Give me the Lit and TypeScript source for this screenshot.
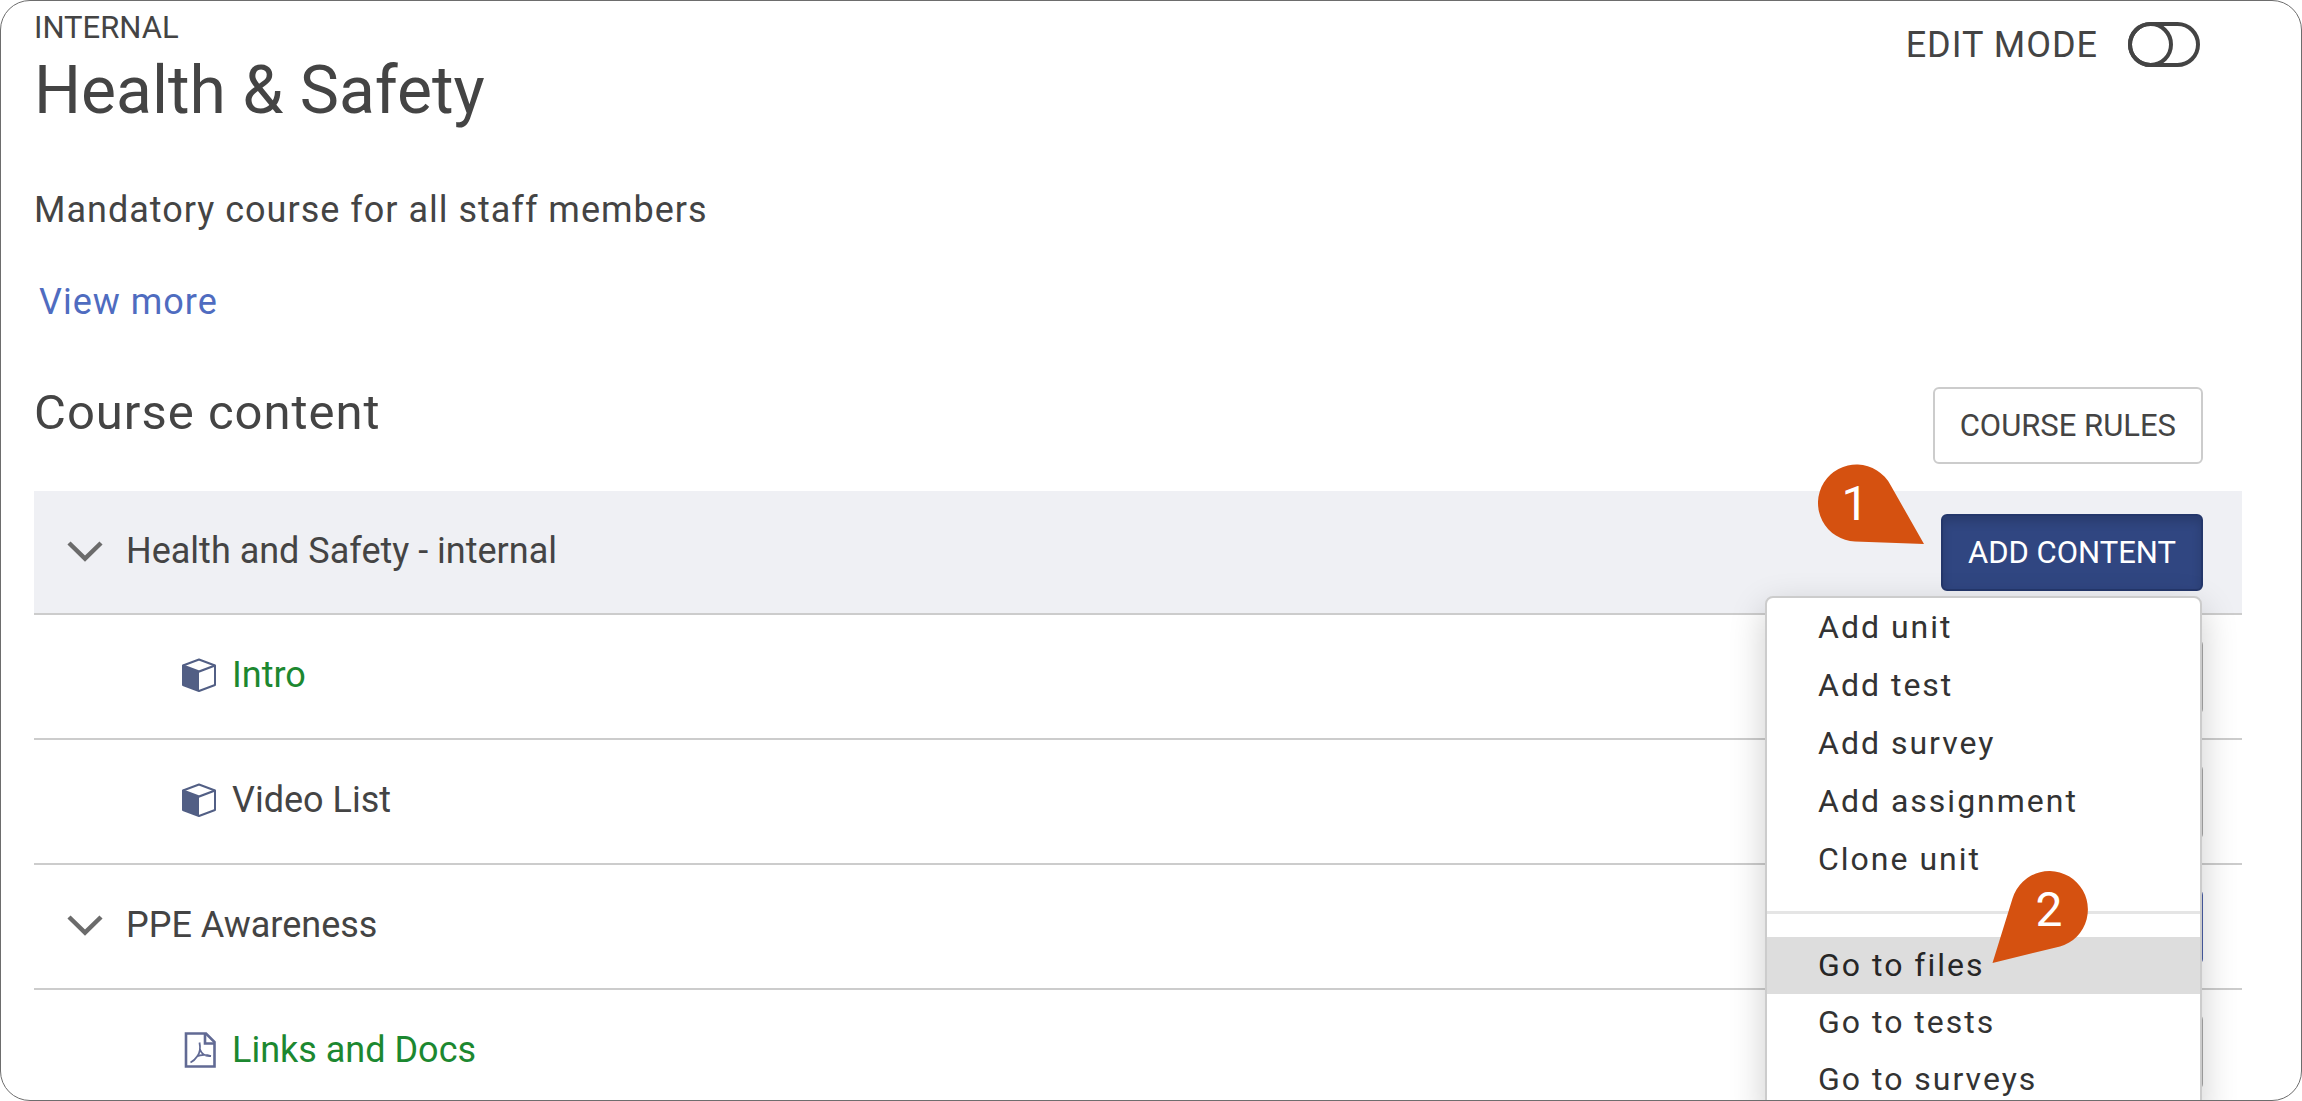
import { LitElement, html, css } from "lit";
import { customElement, state } from "lit/decorators.js";

type Row = { kind: "section" | "unit"; icon?: "cube" | "pdf"; label: string; done?: boolean };

const ROWS: Row[] = [
  { kind: "unit", icon: "cube", label: "Intro", done: true },
  { kind: "unit", icon: "cube", label: "Video List" },
  { kind: "section", label: "PPE Awareness" },
  { kind: "unit", icon: "pdf", label: "Links and Docs", done: true },
];

const MENU_ADD = ["Add unit", "Add test", "Add survey", "Add assignment", "Clone unit"];
const MENU_GO = ["Go to files", "Go to tests", "Go to surveys"];

const chevron = html`<svg class="chevron" viewBox="0 0 36 22" aria-hidden="true">
  <path d="M2 3 L18 18.500 L34 3" fill="none" stroke="#6b6b6b" stroke-width="4.500" />
</svg>`;

const cube = html`<svg class="icon" viewBox="0 0 36 36" aria-hidden="true">
  <path d="M18 2.500 L34 8.500 L34 28 L18 34 L2 28 L2 8.500 Z" fill="#fff" stroke="#525f85" stroke-width="2" stroke-linejoin="round" />
  <path d="M2 8.500 L18 14.500 L18 34 L2 28 Z" fill="#525f85" />
  <path d="M2 8.500 L18 14.500 L34 8.500" fill="none" stroke="#525f85" stroke-width="2.200" />
</svg>`;

const pdf = html`<svg class="icon" viewBox="0 0 36 36" aria-hidden="true">
  <path d="M5 1.500 H25 L33.500 10 V34.500 H5 Z" fill="none" stroke="#616a94" stroke-width="2.600" />
  <path d="M24 2 V11.500 H33" fill="none" stroke="#616a94" stroke-width="2.600" />
  <path d="M18.500 10.500 C19.500 15.500 19 20.500 16.500 24 C14.500 27 12.500 29 9.500 30.500 M19 17.500 C20.500 21.500 24.500 24.500 30 24 M15.500 24.500 C20 22.500 25 22.500 30 24" fill="none" stroke="#616a94" stroke-width="1.800" />
</svg>`;

@customElement("app-root")
export class AppRoot extends LitElement {
  @state() private editMode = false;

  static styles = css`
    :host {
      display: block;
      font-family: Roboto, "Liberation Sans", sans-serif;
      color: #444;
      background: #fff;
    }
    * { box-sizing: border-box; }
    h1, h2, p { margin: 0; font-weight: 400; }
    button { font: inherit; color: inherit; cursor: pointer; }
    .page {
      height: 100vh;
      overflow: hidden;
      border: 1px solid #6d6d6d;
      border-radius: 30px;
      padding: 7px 59px 0 33px;
    }
    .top { display: flex; justify-content: space-between; align-items: flex-start; }
    .kind { font-size: 31px; line-height: 40px; }
    .title { font-size: 66px; line-height: 86px; }
    .edit {
      display: flex;
      align-items: center;
      gap: 30px;
      padding: 12px 42px 0 0;
      font-size: 36px;
      line-height: 46px;
      letter-spacing: 1px;
      cursor: pointer;
    }
    .edit-text { padding-top: 2px; }
    .edit-input {
      appearance: none;
      margin: 0;
      width: 72px;
      height: 45px;
      border: 4px solid #444;
      border-radius: 23px;
      display: flex;
      cursor: pointer;
    }
    .edit-input::before {
      content: "";
      width: 45px;
      height: 45px;
      margin: -4px;
      border: 4px solid #444;
      border-radius: 50%;
      box-sizing: border-box;
    }
    .edit-input:checked::before { margin-left: 23px; }
    .desc { margin-top: 52px; font-size: 36px; line-height: 48px; letter-spacing: 1px; }
    .more {
      display: inline-block;
      margin: 44px 0 0 5px;
      font-size: 36px;
      line-height: 48px;
      letter-spacing: 1px;
      color: #4f6cc0;
      text-decoration: none;
    }
    .content-head {
      display: flex;
      justify-content: space-between;
      margin-top: 61px;
      padding-right: 39px;
    }
    .subtitle { font-size: 49px; line-height: 52px; letter-spacing: 1px; }
    .btn {
      height: 77px;
      padding: 0 25px;
      border-radius: 6px;
      font-size: 31px;
      line-height: 40px;
      text-transform: uppercase;
      white-space: nowrap;
    }
    .rules { border: 2px solid #ccc; background: #fff; }
    .add {
      border: 2px solid #24376b;
      background: #304681;
      color: #fff;
      box-shadow: inset 0 6px 10px rgba(0, 0, 0, 0.14);
    }
    .list { margin-top: 27px; }
    .row {
      display: flex;
      align-items: center;
      height: 125px;
      border-bottom: 2px solid #ccc;
      padding: 0 39px 3px 33px;
      font-size: 36px;
      line-height: 44px;
    }
    .head { height: 124px; background: #eff0f4; }
    .toggle {
      display: flex;
      align-items: center;
      gap: 23px;
      border: 0;
      padding: 0;
      background: none;
      text-align: left;
    }
    .chevron { width: 36px; height: 22px; }
    .unit { padding-left: 147px; gap: 15px; }
    .icon { width: 36px; height: 36px; }
    .link { color: inherit; text-decoration: none; }
    .done { color: #1c8830; }
    .side,
    .drop { margin: 4px 0 0 auto; }
    .side { width: 40px; height: 76px; border: 2px solid #aaa; border-radius: 6px; background: #fff; }
    .side-main { border-color: #4a5fa8; background: #4a5fa8; }
    .drop { position: relative; display: flex; }
    .menu {
      position: absolute;
      z-index: 1;
      top: 82px;
      right: 1px;
      width: 437px;
      height: 520px;
      border: 2px solid #ccc;
      border-radius: 8px;
      background: #fff;
      box-shadow: 0 12px 36px rgba(0, 0, 0, 0.2);
      color: #333;
    }
    .item {
      display: block;
      width: 100%;
      padding: 0 51px;
      border: 0;
      background: none;
      font-size: 32px;
      line-height: 58px;
      letter-spacing: 2px;
      text-align: left;
    }
    .go { line-height: 57px; }
    .active { background: #ddd; color: #262626; }
    .rule { border: 0; height: 3px; margin: 23px 0; background: #e5e5e5; }
    .pin { position: absolute; z-index: 2; }
    .pin-one { top: -50px; right: 278px; width: 108px; height: 80px; }
    .pin-two { top: 356px; right: 114px; width: 98px; height: 94px; }
    .num { font-size: 48px; fill: #fff; text-anchor: middle; }
  `;

  private renderRow(row: Row) {
    if (row.kind === "section") {
      return html`<div class="row">
        <button class="toggle">${chevron}<span>${row.label}</span></button>
        <span class="side side-main"></span>
      </div>`;
    }
    return html`<div class="row unit">
      ${row.icon === "pdf" ? pdf : cube}
      <a class="link ${row.done ? "done" : ""}" href="#">${row.label}</a>
      <span class="side"></span>
    </div>`;
  }

  render() {
    return html`<main class="page">
      <header class="top">
        <div>
          <p class="kind">INTERNAL</p>
          <h1 class="title">Health &amp; Safety</h1>
        </div>
        <label class="edit">
          <span class="edit-text">EDIT MODE</span>
          <input
            class="edit-input"
            type="checkbox"
            role="switch"
            .checked=${this.editMode}
            @change=${() => (this.editMode = !this.editMode)}
          />
        </label>
      </header>
      <p class="desc">Mandatory course for all staff members</p>
      <a class="more" href="#">View more</a>
      <div class="content-head">
        <h2 class="subtitle">Course content</h2>
        <button class="btn rules">Course rules</button>
      </div>
      <section class="list">
        <div class="row head">
          <button class="toggle">${chevron}<span>Health and Safety - internal</span></button>
          <div class="drop">
            <button class="btn add" aria-haspopup="menu" aria-expanded="true">Add content</button>
            <div class="menu" role="menu">
              ${MENU_ADD.map((t) => html`<button class="item" role="menuitem">${t}</button>`)}
              <hr class="rule" />
              ${MENU_GO.map((t, i) => html`<button class="item go ${i === 0 ? "active" : ""}" role="menuitem">${t}</button>`)}
            </div>
            <svg class="pin pin-one" viewBox="0 0 108 80" aria-label="Step 1">
              <path d="M73.500 21 A38.500 38.500 0 1 0 38 77.500 L107 80 Z" fill="#d55110" />
              <text class="num" x="38" y="56">1</text>
            </svg>
            <svg class="pin pin-two" viewBox="0 0 98 94" aria-label="Step 2">
              <path d="M21.500 28.500 A38.500 38.500 0 1 1 69 76.500 L1.500 93 Z" fill="#d55110" />
              <text class="num" x="58" y="56">2</text>
            </svg>
          </div>
        </div>
        ${ROWS.map((r) => this.renderRow(r))}
      </section>
    </main>`;
  }
}
